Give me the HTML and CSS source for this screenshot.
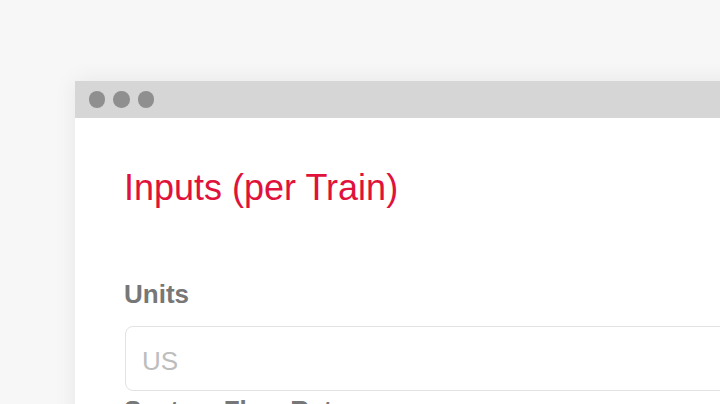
FILE: index.html
```html
<!DOCTYPE html>
<html lang="en">
<head>
<meta charset="utf-8">
<title>Inputs</title>
<link rel="stylesheet" href="styles.css">
</head>
<body>
<div class="stage">
  <div class="window">
    <div class="titlebar">
      <span class="dot"></span>
      <span class="dot"></span>
      <span class="dot"></span>
    </div>
    <div class="content">
      <h1 class="heading">Inputs (per Train)</h1>
      <label class="label">Units</label>
      <div class="field">US</div>
      <label class="label label-next">System Flow Rate</label>
    </div>
  </div>
</div>
</body>
</html>
```

FILE: styles.css
```css
html, body {
  margin: 0;
  padding: 0;
}
body {
  background: #f7f7f7;
  font-family: "Liberation Sans", Arial, sans-serif;
  width: 720px;
  height: 404px;
  overflow: hidden;
}
.stage {
  padding: 81px 0 0 75px;
  display: flex;
}
.window {
  width: 720px;
  flex-shrink: 0;
  background: #ffffff;
  box-shadow: 0 0 22px rgba(0, 0, 0, 0.07);
  display: flex;
  flex-direction: column;
}
.titlebar {
  height: 37px;
  background: #d6d6d6;
  display: flex;
  align-items: center;
  gap: 8px;
  padding-left: 13.5px;
}
.dot {
  width: 16.5px;
  height: 16.5px;
  border-radius: 50%;
  background: #8f8f8f;
}
.content {
  padding: 50px 0 0 49px;
  display: flex;
  flex-direction: column;
}
.heading {
  margin: 0;
  font-weight: normal;
  font-size: 36px;
  line-height: 40px;
  color: #e0123c;
}
.label {
  margin-top: 71px;
  font-weight: bold;
  font-size: 26px;
  line-height: 30px;
  color: #777777;
}
.field {
  margin-top: 17px;
  margin-left: 1px;
  height: 30px;
  padding: 19px 16px 14px;
  border: 1px solid #e2e2e2;
  border-radius: 8px;
  font-size: 26px;
  line-height: 30px;
  color: #bdbdbd;
}
.label-next {
  margin-top: 4px;
}
```
